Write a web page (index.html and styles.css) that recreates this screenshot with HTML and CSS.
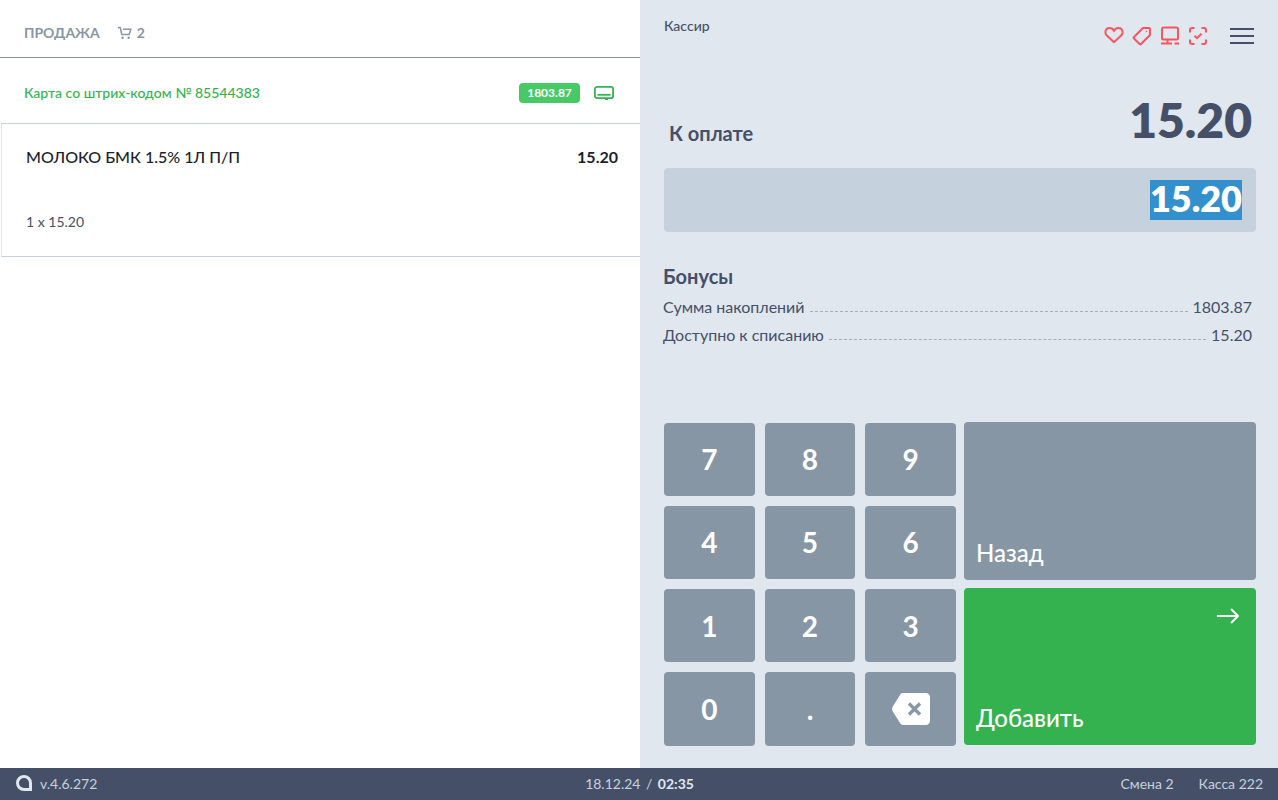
FILE: index.html
```html
<!DOCTYPE html>
<html lang="ru">

<head>
    <meta charset="UTF-8">
    <title>Касса</title>
    <link rel="stylesheet" href="styles.css">
</head>

<body>
    <div class="main">
        <section class="receipt">
            <div class="receipt-head">
                <span class="receipt-title">ПРОДАЖА</span>
                <svg class="cart-icon" width="16" height="14" viewBox="0 0 16 14" fill="none" stroke="#8796a5" stroke-width="1.5">
                    <path d="M1 1.5h2.2l1.6 7h7.4l1.6-5.2H6" />
                    <circle cx="5.6" cy="11.8" r="1.200" fill="#8796a5" stroke="none" />
                    <circle cx="11.6" cy="11.8" r="1.200" fill="#8796a5" stroke="none" />
                </svg>
                <span class="receipt-count">2</span>
            </div>
            <div class="card-row">
                <span class="card-label">Карта со штрих-кодом № 85544383</span>
                <span class="card-badge">1803.87</span>
                <svg class="card-icon" width="20" height="16" viewBox="0 0 20 16" fill="none" stroke="#34b24f" stroke-width="1.8">
                    <rect x=".9" y="1.900" width="18.200" height="11.200" rx="2.200" />
                    <path d="M3.500 9.800h13" stroke-width="1.800" />
                    <path d="M11 14.400h3" stroke-width="1.200" />
                </svg>
            </div>
            <div class="item">
                <div class="item-top">
                    <span class="item-name">МОЛОКО БМК 1.5% 1Л П/П</span>
                    <span class="item-sum">15.20</span>
                </div>
                <div class="item-qty">1 x 15.20</div>
            </div>
        </section>

        <section class="payment">
            <div class="pay-head">
                <span class="cashier">Кассир</span>
                <div class="head-icons">
                    <svg width="20" height="18" viewBox="0 0 20 18" fill="none" stroke="#f9545f" stroke-width="2">
                        <path d="M10 16.200 2.600 9.200C.4 6.800 1.400 2 5.400 2c2 0 3.600 1 4.600 2.800C11 3 12.600 2 14.600 2c4 0 5 4.800 2.800 7.200z" />
                    </svg>
                    <svg width="20" height="20" viewBox="0 0 20 20" fill="none" stroke="#f9545f" stroke-width="2">
                        <path d="M11 2h6c.6 0 1 .4 1 1v6L9 18c-.5.5-1 .5-1.500 0L2 12.500c-.5-.5-.5-1 0-1.500z" stroke-linejoin="round" />
                        <circle cx="14.500" cy="5.500" r=".8" fill="#f9545f" stroke="none" />
                    </svg>
                    <svg width="20" height="20" viewBox="0 0 20 20" fill="none" stroke="#f9545f" stroke-width="2">
                        <rect x="2" y="1.500" width="16" height="12" rx="1.500" />
                        <path d="M7.500 14v3.500M1 17.500h11M14.500 17.500H19" />
                    </svg>
                    <svg width="20" height="20" viewBox="0 0 20 20" fill="none" stroke="#f9545f" stroke-width="2">
                        <path d="M6.500 2H4C2.800 2 2 2.800 2 4v2.500M13.500 2H16c1.200 0 2 .8 2 2v2.500M6.500 18H4c-1.200 0-2-.8-2-2v-2.500M13.500 18H16c1.200 0 2-.8 2-2v-2.500" />
                        <path d="M6.500 9.800 9 12.200l4.500-4.400" />
                    </svg>
                    <div class="burger"><i></i><i></i><i></i></div>
                </div>
            </div>

            <div class="to-pay">
                <span class="to-pay-label">К оплате</span>
                <span class="to-pay-sum">15.20</span>
            </div>

            <div class="amount-field"><span class="amount-value">15.20</span></div>

            <h2 class="bonus-title">Бонусы</h2>
            <div class="bonus-row">
                <span>Сумма накоплений</span><span class="dots"></span><span>1803.87</span>
            </div>
            <div class="bonus-row">
                <span>Доступно к списанию</span><span class="dots"></span><span>15.20</span>
            </div>

            <div class="keypad">
                <div class="digits">
                    <button class="key">7</button>
                    <button class="key">8</button>
                    <button class="key">9</button>
                    <button class="key">4</button>
                    <button class="key">5</button>
                    <button class="key">6</button>
                    <button class="key">1</button>
                    <button class="key">2</button>
                    <button class="key">3</button>
                    <button class="key">0</button>
                    <button class="key">.</button>
                    <button class="key">
                        <svg class="backspace" width="38" height="32" viewBox="0 0 38 32">
                            <path d="M11 0h23c2.200 0 4 1.800 4 4v24c0 2.200-1.800 4-4 4H11c-1 0-1.800-.5-2.500-1.200L.8 18.500c-1-1.500-1-3.500 0-5L8.500 1.200C9.200.5 10 0 11 0z" fill="#fff" />
                            <path d="M17 10.500l11 11M28 10.500l-11 11" stroke="#8796a5" stroke-width="3.200" fill="none" />
                        </svg>
                    </button>
                </div>
                <div class="actions">
                    <button class="action action-back">Назад</button>
                    <button class="action action-add">
                        <svg class="arrow" width="24" height="16" viewBox="0 0 24 16" fill="none" stroke="#fff" stroke-width="2">
                            <path d="M1 8h21M15 1l7 7-7 7" />
                        </svg>
                        Добавить
                    </button>
                </div>
            </div>
        </section>
    </div>

    <footer class="status">
        <div class="status-left">
            <svg width="16" height="16" viewBox="0 0 16 16" fill="none" stroke="#e0e7ef" stroke-width="3">
                <path d="M14.500 14.500H8A6.500 6.500 0 1 1 14.500 8z" />
            </svg>
            <span>v.4.6.272</span>
        </div>
        <div class="status-date">18.12.24<span class="date-sep">/</span><b>02:35</b></div>
        <div class="status-right">
            <span>Смена 2</span>
            <span>Касса 222</span>
        </div>
    </footer>
</body>

</html>
```

FILE: styles.css
```css
* {
    box-sizing: border-box;
}

body {
    margin: 0;
    height: 800px;
    overflow: hidden;
    font-family: Lato, "Noto Sans", sans-serif;
    color: #455068;
    background: #fff;
    display: flex;
    flex-direction: column;
}

.main {
    flex: 1;
    display: flex;
    min-height: 0;
}

/* left side */
.receipt {
    width: 640px;
    background: #fff;
}

.receipt-head {
    height: 58px;
    padding: 8px 24px 0;
    display: flex;
    align-items: center;
    border-bottom: 1px solid #8796a5;
    color: #8796a5;
    font-size: 14px;
    font-weight: 700;
}

.cart-icon {
    margin-left: 17px;
    margin-right: 4px;
}

.card-row {
    height: 66px;
    margin-left: 1px;
    padding: 4px 26px 0 23px;
    display: flex;
    align-items: center;
    border-bottom: 1px solid #c5d1dd;
}

.card-label {
    flex: 1;
    color: #34b24f;
    font-size: 14px;
    font-weight: 500;
}

.card-badge {
    width: 61px;
    height: 20px;
    line-height: 20px;
    text-align: center;
    border-radius: 4px;
    background: #47c966;
    color: #fff;
    font-size: 12px;
    font-weight: 700;
}

.card-icon {
    margin-left: 14px;
}

.item {
    height: 133px;
    margin-left: 1px;
    padding: 23px 22px 0 24px;
    border-left: 1px solid #e0e7ef;
    border-bottom: 1px solid #c5d1dd;
}

.item-top {
    display: flex;
    justify-content: space-between;
    color: #1a1f2b;
    font-size: 16px;
    font-weight: 700;
    line-height: 19px;
}

.item-name {
    font-weight: 500;
}

.item-qty {
    margin-top: 47px;
    font-size: 14px;
    line-height: 17px;
}

/* right side */
.payment {
    width: 638px;
    padding: 0 22px 0 24px;
    background: #e0e7ef;
}

.pay-head {
    height: 58px;
    display: flex;
    justify-content: space-between;
}

.cashier {
    margin-top: 18px;
    font-size: 14px;
    line-height: 16px;
    font-weight: 500;
}

.head-icons {
    margin-top: 26px;
    margin-right: 2px;
    display: flex;
    align-items: flex-start;
    gap: 8px;
    height: 22px;
}

.burger {
    margin-left: 14px;
    margin-top: 2px;
    width: 24px;
    display: flex;
    flex-direction: column;
    gap: 5px;
}

.burger i {
    display: block;
    height: 2px;
    background: #455068;
}

.to-pay {
    height: 110px;
    padding: 32px 4px 0 5px;
    display: flex;
    justify-content: space-between;
    align-items: flex-start;
}

.to-pay-label {
    margin-top: 31px;
    font-size: 20px;
    line-height: 24px;
    font-weight: 700;
}

.to-pay-sum {
    font-size: 48px;
    line-height: 60px;
    font-weight: 800;
}

.amount-field {
    height: 64px;
    padding-right: 14px;
    border-radius: 4px;
    background: #c5d1dd;
    display: flex;
    align-items: center;
    justify-content: flex-end;
}

.amount-value {
    display: inline-block;
    height: 40px;
    background: #3390cc;
    color: #fff;
    font-size: 36px;
    line-height: 37px;
    font-weight: 800;
}

.bonus-title {
    margin: 32px 0 5px -1px;
    font-size: 20px;
    line-height: 24px;
    font-weight: 700;
}

.bonus-row {
    margin-left: -1px;
    margin-right: 4px;
    height: 28px;
    display: flex;
    align-items: center;
    font-size: 16px;
    line-height: 20px;
}

.dots {
    flex: 1;
    height: 9px;
    margin: 0 5px;
    border-bottom: 1px dashed #a3afbc;
}

.keypad {
    margin-top: 73px;
    display: flex;
    justify-content: space-between;
}

.digits {
    width: 292px;
    display: grid;
    grid-template-columns: repeat(3, 1fr);
    grid-auto-rows: 73.330px;
    gap: 10px;
    padding-top: .5px;
}

.key,
.action {
    border: none;
    border-radius: 4px;
    background: #8796a5;
    color: #fff;
    font-family: inherit;
    padding: 0;
}

.key {
    font-size: 28px;
    font-weight: 700;
    display: flex;
    align-items: center;
    justify-content: center;
}

.backspace {
    display: block;
}

.actions {
    width: 292px;
    display: grid;
    grid-auto-rows: 157.500px;
    gap: 8.500px;
}

.action {
    position: relative;
    display: flex;
    align-items: flex-end;
    padding: 0 12px 13px;
    font-size: 24px;
    line-height: 29px;
    font-weight: 500;
}

.action-add {
    height: 157px;
    background: #34b24f;
}

.arrow {
    position: absolute;
    top: 20px;
    right: 16px;
}

/* bottom bar */
.status {
    height: 32px;
    padding: 0 15px 2px 16px;
    display: grid;
    grid-template-columns: 1fr auto 1fr;
    align-items: center;
    background: #455068;
    color: #c5d1dd;
    font-size: 14px;
}

.status-left {
    display: flex;
    align-items: center;
    gap: 8px;
}

.date-sep {
    margin: 0 5.500px;
}

.status-date b {
    color: #e0e7ef;
}

.status-right {
    display: flex;
    justify-content: flex-end;
    gap: 25px;
}
```
